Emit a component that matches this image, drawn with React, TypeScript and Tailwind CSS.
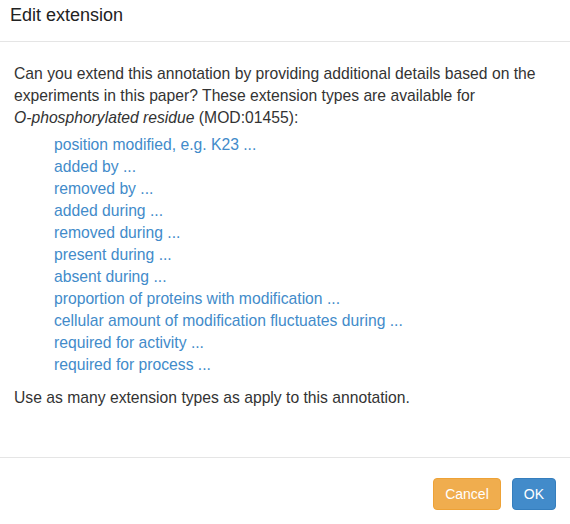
const extensionTypes = [
  'position modified, e.g. K23 ...',
  'added by ...',
  'removed by ...',
  'added during ...',
  'removed during ...',
  'present during ...',
  'absent during ...',
  'proportion of proteins with modification ...',
  'cellular amount of modification fluctuates during ...',
  'required for activity ...',
  'required for process ...',
];

export default function App() {
  return (
    <div
      className="flex h-[524px] w-[570px] flex-col overflow-hidden bg-white text-[#333]"
      style={{ fontFamily: '"Liberation Sans", Arial, sans-serif' }}
    >
      {/* ── Header ─────────────────────────────────────────── */}
      <div className="h-[42px] shrink-0 border-b border-[#e5e5e5] px-[10px] pt-[5px]">
        <h4 className="text-[18px] leading-[20px] text-[#222]">Edit extension</h4>
      </div>

      {/* ── Body ───────────────────────────────────────────── */}
      <div className="flex-1 px-[14px] pt-[21px] text-[15.7px] leading-[22px]">
        <p>
          Can you extend this annotation by providing additional details based on the experiments in
          this paper? These extension types are available for{' '}
          <span className="whitespace-nowrap">
            <i>O-phosphorylated residue</i> (MOD:01455):
          </span>
        </p>
        <ul className="mt-[5px] ml-[40px]">
          {extensionTypes.map((t) => (
            <li key={t}>
              <a href="#" className="text-[#428bca] hover:underline">
                {t}
              </a>
            </li>
          ))}
        </ul>
        <p className="mt-[11px]">Use as many extension types as apply to this annotation.</p>
      </div>

      {/* ── Footer ─────────────────────────────────────────── */}
      <div className="flex h-[67px] shrink-0 items-start justify-end gap-[11px] border-t border-[#e5e5e5] pt-[20px] pr-[14px]">
        <button className="h-[32px] rounded-[4px] border border-[#eea236] bg-[#f0ad4e] px-[11px] text-[14px] text-white">
          Cancel
        </button>
        <button className="h-[32px] rounded-[4px] border border-[#357ebd] bg-[#428bca] px-[11px] text-[14px] text-white">
          OK
        </button>
      </div>
    </div>
  );
}
